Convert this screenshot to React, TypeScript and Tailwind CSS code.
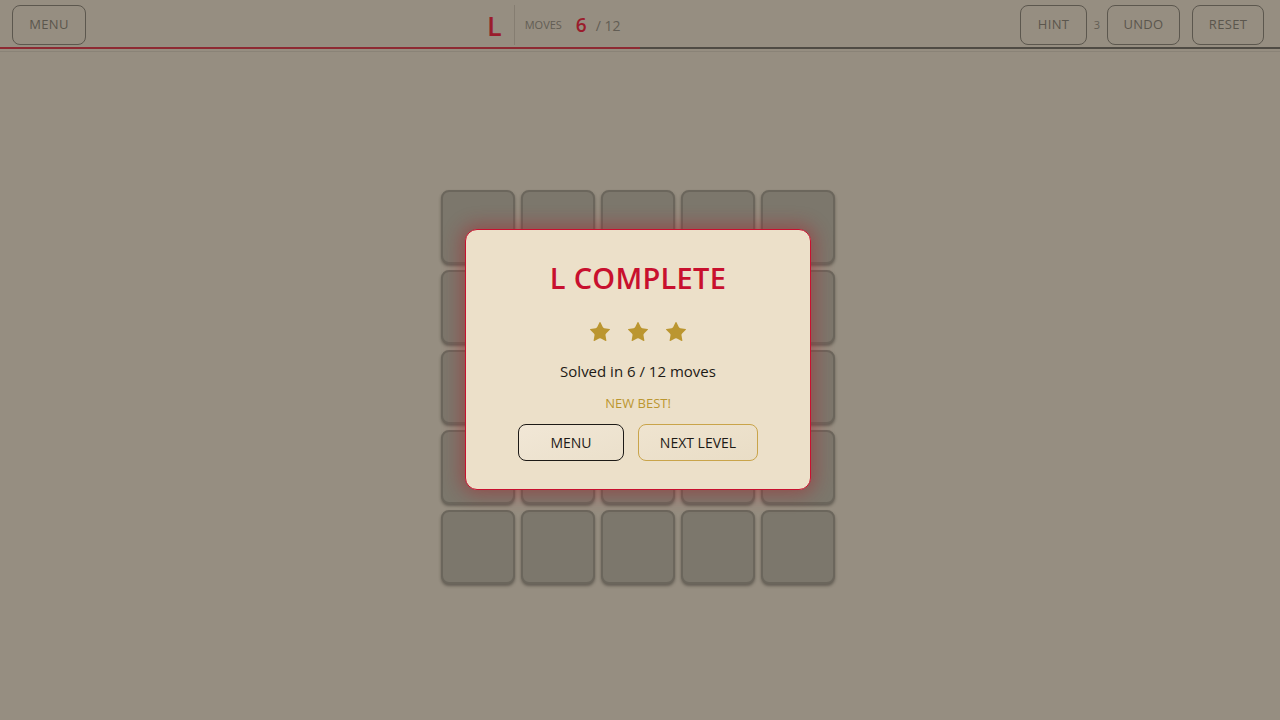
import { Star } from 'lucide-react';

const tiles = Array.from({ length: 25 }, (_, i) => i);

const HeaderButton = ({ label, className = '' }: { label: string; className?: string }) => (
    <button className={`h-10 rounded-lg border border-[#5c574e] text-[13px] tracking-wide text-[#5b564d] ${className}`}>
        {label}
    </button>
);

const App = () => {
    return (
        <div className="w-full h-[720px] bg-[#968e81] flex flex-col overflow-hidden" style={{ fontFamily: '"Open Sans", "Noto Sans", sans-serif' }}>
            {/* Top bar */}
            <header className="relative h-[47px] shrink-0 flex items-center justify-between pl-3 pr-4 pt-[3px]">
                <HeaderButton label="MENU" className="w-[74px]" />

                <div className="absolute left-[487px] top-[5px] h-10 flex items-center">
                    <span className="text-[27px] font-semibold leading-none text-[#9a1c2c] pr-3">L</span>
                    <div className="w-px h-10 bg-[#857d71]" />
                    <span className="ml-[10px] text-[11px] text-[#625d54]">MOVES</span>
                    <span className="ml-[14px] text-[19px] font-semibold text-[#9a1c2c]">6</span>
                    <span className="ml-[9px] text-[14px] text-[#625d54]">/ 12</span>
                </div>

                <div className="flex items-center">
                    <HeaderButton label="HINT" className="w-[67px]" />
                    <span className="w-5 text-center text-[11px] text-[#625d54]">3</span>
                    <HeaderButton label="UNDO" className="w-[73px]" />
                    <HeaderButton label="RESET" className="w-[72px] ml-3" />
                </div>
            </header>

            {/* Progress */}
            <div className="h-[2px] bg-[#4f4b44] shrink-0">
                <div className="h-full bg-[#8e2a33]" style={{ width: `${(6 / 12) * 100}%` }} />
            </div>
            <div className="h-[3px] border-b border-[#8a8377] shrink-0" />

            {/* Board */}
            <main className="relative flex-1 flex items-center justify-center">
                <div className="grid grid-cols-5 gap-[6px] mt-[2px] -ml-[5px]">
                    {tiles.map(t => (
                        <div
                            key={t}
                            className="w-[74px] h-[74px] rounded-lg bg-[#7c776c] border-2 border-[#6b665c] shadow-[0_2px_3px_rgba(40,36,30,0.45)]"
                        />
                    ))}
                </div>

                {/* Completion dialog */}
                <div className="absolute left-[465px] top-[177px] w-[346px] h-[261px] rounded-xl border-[1.5px] border-[#c8102e] bg-[#ece0c9] shadow-[0_0_18px_4px_rgba(170,30,40,0.45)] flex flex-col items-center">
                    <h1 className="mt-[33px] text-[29px] font-semibold leading-none tracking-[0.01em] text-[#c8102e]">L COMPLETE</h1>
                    <div className="mt-[28px] flex gap-[14px] text-[#bb9630]">
                        <Star size={24} fill="currentColor" strokeWidth={0} />
                        <Star size={24} fill="currentColor" strokeWidth={0} />
                        <Star size={24} fill="currentColor" strokeWidth={0} />
                    </div>
                    <p className="mt-[16px] text-[15px] font-medium text-[#1d1a16]">Solved in 6 / 12 moves</p>
                    <p className="mt-[11px] text-[13px] font-medium text-[#bb9630]">NEW BEST!</p>
                    <div className="mt-[11px] flex gap-[14px]">
                        <button className="w-[106px] h-[37px] rounded-lg border-[1.5px] border-[#1d1a16] bg-gradient-to-br from-[#f1e7d6] to-[#ebe0cb] text-[14px] font-medium text-[#1d1a16]">
                            MENU
                        </button>
                        <button className="w-[120px] h-[37px] rounded-lg border-[1.5px] border-[#c9a44a] bg-gradient-to-br from-[#efe4d0] to-[#e9ddc6] text-[14px] font-medium text-[#1d1a16]">
                            NEXT LEVEL
                        </button>
                    </div>
                </div>
            </main>
        </div>
    );
};

export default App;
